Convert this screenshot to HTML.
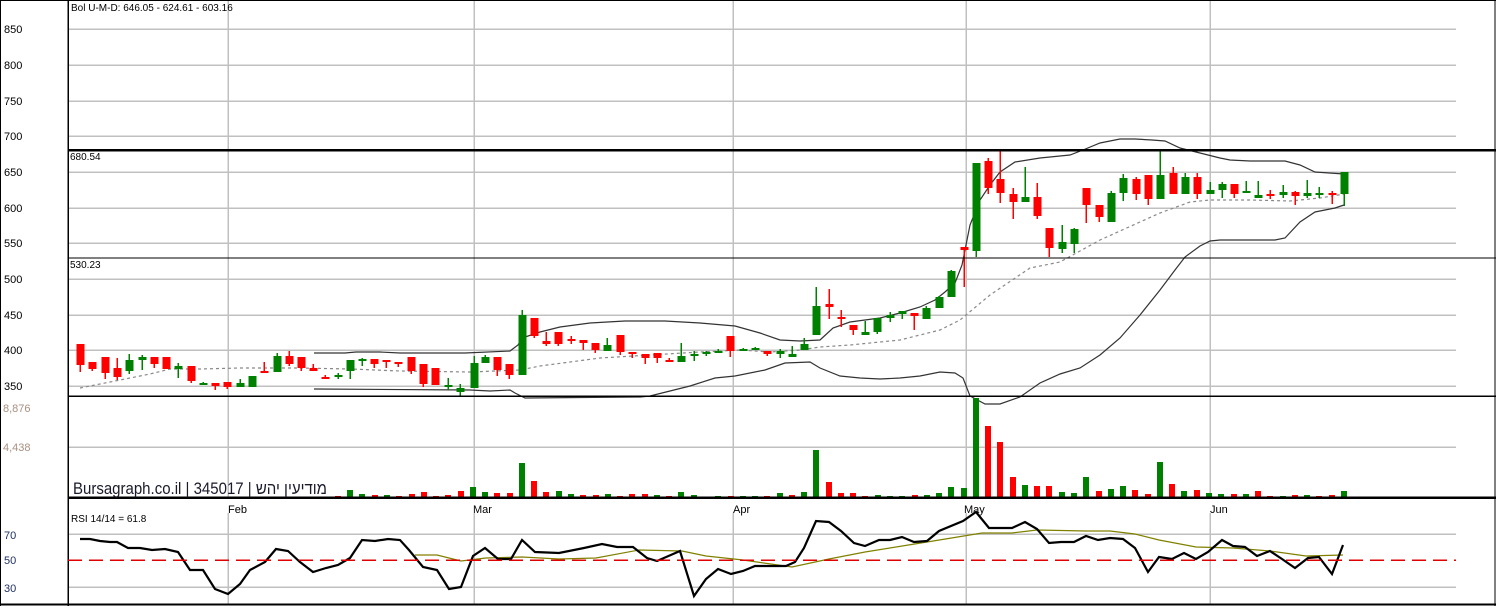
<!DOCTYPE html>
<html><head><meta charset="utf-8">
<style>
html,body{margin:0;padding:0;background:#fff;}
body{width:1496px;height:606px;overflow:hidden;}
svg text{font-family:"Liberation Sans",Arial,sans-serif;}
</style></head>
<body>
<svg id="c" width="1496" height="606" xmlns="http://www.w3.org/2000/svg" shape-rendering="crispEdges">
<rect width="1496" height="606" fill="#fff"/>
<g id="grid" stroke="#c0c0c0" stroke-width="1.5"></g>
<g id="bands" fill="none" shape-rendering="auto"></g>
<g id="cand"></g>
<g id="vol"></g>
<g id="rsi" fill="none" shape-rendering="auto"></g>
<g id="frame" stroke="#000"></g>
<g font-size="11" fill="#000">
<text x="4" y="33">850</text><text x="4" y="69">800</text><text x="4" y="105">750</text>
<text x="4" y="140">700</text><text x="4" y="176">650</text><text x="4" y="212">600</text>
<text x="4" y="247">550</text><text x="4" y="283">500</text><text x="4" y="319">450</text>
<text x="4" y="354">400</text><text x="4" y="390">350</text>
<text x="3" y="412" fill="#a89080">8,876</text><text x="3" y="451" fill="#a89080">4,438</text>
<text x="4" y="539" fill="#203060">70</text><text x="4" y="564" fill="#203060">50</text><text x="4" y="592" fill="#203060">30</text>
<text x="71" y="11" font-size="10">Bol U-M-D: 646.05 - 624.61 - 603.16</text>
<text x="70" y="160" font-size="10">680.54</text>
<text x="70" y="268" font-size="10">530.23</text>
<text x="71" y="522" font-size="10">RSI 14/14 = 61.8</text>
<text x="228" y="513">Feb</text><text x="473" y="513">Mar</text><text x="733" y="513">Apr</text>
<text x="964" y="513">May</text><text x="1210" y="513">Jun</text>
<text x="73" y="494" font-size="17" fill="#1a1a2a" textLength="254" lengthAdjust="spacingAndGlyphs" font-family="'Liberation Sans','Noto Sans CJK JP',sans-serif">Bursagraph.co.il | 345017 | מודיעין יהש</text>
</g>
</svg>
<script>
var NS="http://www.w3.org/2000/svg";
function el(p,t,a){var e=document.createElementNS(NS,t);for(var k in a)e.setAttribute(k,a[k]);document.getElementById(p).appendChild(e);return e;}
[29,65,101,136,172,208,243,279,315,350,386,447,534,587].forEach(function(y){el("grid","line",{x1:68,x2:1456,y1:y,y2:y});});
[228,474,733,966,1210].forEach(function(x){el("grid","line",{x1:x,x2:x,y1:1,y2:497});el("grid","line",{x1:x,x2:x,y1:513,y2:604});});
el("frame","line",{x1:0,x2:1496,y1:0.5,y2:0.5,"stroke-width":1});
el("frame","line",{x1:0.5,x2:0.5,y1:0,y2:606,"stroke-width":1});
el("frame","line",{x1:1495,x2:1495,y1:0,y2:606,"stroke-width":1});
el("frame","line",{x1:68,x2:68,y1:0,y2:606,"stroke-width":1.5});
el("frame","line",{x1:68,x2:1496,y1:150,y2:150,"stroke-width":2.5});
el("frame","line",{x1:68,x2:1496,y1:258,y2:258,"stroke-width":1.3});
el("frame","line",{x1:68,x2:1496,y1:396,y2:396,"stroke-width":1.5});
el("frame","line",{x1:68,x2:1496,y1:497.5,y2:497.5,"stroke-width":2.5});
el("frame","line",{x1:0,x2:1496,y1:604.5,y2:604.5,"stroke-width":2});
el("frame","line",{x1:68,x2:1456,y1:560,y2:560,stroke:"#e00000","stroke-width":1.5,"stroke-dasharray":"14,7"});
function pl(g,pts,st,w,dash){var a={points:pts.map(function(p){return p.join(",")}).join(" "),stroke:st,"stroke-width":w};if(dash)a["stroke-dasharray"]=dash;el(g,"polyline",a);}
pl("bands",[[314,353],[345,353],[356,352],[380,352],[400,353],[465,353],[510,351],[518,345],[522,338],[540,332],[560,327],[590,323],[625,321],[665,321],[700,323],[735,326],[760,333],[780,340],[800,341],[820,340],[833,328],[850,322],[880,318],[900,313],[920,307],[935,300],[945,292],[955,283],[962,265],[970,225],[980,200],[990,185],[1000,172],[1015,162],[1040,158],[1070,155],[1083,150],[1100,143],[1120,139],[1135,139],[1152,140],[1165,141],[1180,148],[1200,153],[1220,158],[1230,160],[1250,161],[1285,161],[1300,165],[1315,172],[1344,174]],"#333",1.2);
pl("bands",[[314,389],[470,390],[490,391],[510,390],[515,393],[525,398],[640,397],[650,396],[690,386],[715,378],[735,376],[765,370],[785,363],[810,362],[820,368],[840,376],[860,378],[880,379],[900,378],[920,376],[940,372],[955,373],[963,378],[970,396],[985,404],[1000,404],[1020,397],[1040,383],[1060,374],[1080,368],[1100,355],[1120,338],[1140,315],[1160,290],[1175,270],[1185,257],[1200,246],[1210,241],[1220,240],[1275,240],[1285,238],[1300,222],[1315,212],[1335,208],[1344,205]],"#333",1.2);
pl("bands",[[80,388],[120,380],[150,374],[170,369],[200,369],[240,368],[300,368],[350,369],[400,371],[470,372],[520,370],[540,366],[600,358],[650,355],[700,352],[740,350],[770,352],[800,350],[820,347],[850,345],[900,340],[940,330],[960,320],[990,295],[1030,268],[1060,262],[1100,240],[1140,222],[1160,213],[1190,202],[1210,200],[1250,200],[1290,201],[1320,198],[1344,194]],"#888",1.2,"3,3");
var C=[[80,344,365,344,372,"r"],[92,362,369,362,371,"r"],[105,357,373,357,379,"r"],[117,368,377,358,380,"r"],[129,360,371,354,374,"g"],[142,357,360,355,370,"g"],[154,357,364,357,368,"r"],[166,357,369,357,369,"r"],[178,366,369,363,378,"g"],[191,366,381,366,383,"r"],[203,383,385,382,385,"g"],[215,383,386,383,390,"r"],[227,382,387,382,389,"r"],[240,383,387,379,387,"g"],[252,376,387,376,387,"g"],[264,371,372,362,372,"r"],[277,356,372,353,372,"g"],[289,356,364,351,366,"r"],[301,357,368,357,371,"r"],[313,368,371,364,371,"r"],[325,377,378,375,378,"r"],[338,375,377,373,379,"g"],[350,360,371,360,379,"g"],[362,359,360,358,366,"g"],[374,359,364,359,368,"r"],[386,360,362,360,368,"r"],[398,362,364,362,367,"r"],[411,357,371,357,374,"r"],[423,364,384,364,387,"r"],[435,368,385,368,385,"r"],[448,385,387,378,390,"g"],[460,388,392,384,396,"g"],[474,363,388,356,388,"g"],[485,357,363,355,363,"g"],[497,357,370,357,376,"r"],[509,364,375,364,379,"r"],[522,315,375,310,375,"g"],[534,318,336,318,338,"r"],[546,341,344,332,346,"r"],[558,332,344,332,346,"r"],[571,339,341,336,344,"r"],[583,340,343,340,350,"r"],[595,343,350,343,353,"r"],[607,345,351,338,351,"g"],[620,335,352,335,355,"r"],[632,352,354,352,358,"r"],[645,354,358,354,364,"r"],[657,353,358,353,363,"r"],[669,360,362,358,362,"r"],[681,356,362,343,362,"g"],[694,354,356,351,361,"g"],[706,352,354,351,356,"g"],[718,351,352,349,352,"g"],[730,336,351,336,357,"r"],[743,349,351,348,351,"g"],[755,348,349,347,350,"g"],[767,351,354,351,356,"r"],[780,351,354,349,358,"g"],[792,354,357,346,357,"g"],[804,344,350,338,350,"g"],[816,306,335,287,335,"g"],[829,304,307,289,319,"r"],[841,317,319,310,327,"r"],[853,325,330,325,335,"r"],[865,332,335,321,335,"g"],[877,318,332,318,334,"g"],[890,315,318,312,322,"g"],[902,311,314,311,319,"g"],[914,313,316,313,330,"r"],[926,308,319,306,319,"g"],[939,297,308,296,308,"g"],[951,271,297,270,297,"g"],[964,247,250,247,287,"r"],[976,163,251,163,257,"g"],[988,161,188,158,194,"r"],[1000,179,193,151,203,"r"],[1013,194,202,188,219,"r"],[1025,197,202,167,202,"g"],[1037,197,216,183,219,"r"],[1049,228,248,228,257,"r"],[1062,242,249,225,253,"g"],[1074,229,244,228,253,"g"],[1086,188,205,188,223,"r"],[1099,205,217,205,222,"r"],[1111,193,222,191,222,"g"],[1123,178,193,174,201,"g"],[1136,179,194,177,200,"r"],[1148,175,199,175,205,"r"],[1160,175,199,151,199,"g"],[1173,173,194,167,194,"r"],[1185,177,194,173,194,"g"],[1197,177,194,173,199,"r"],[1210,190,194,182,194,"g"],[1222,184,190,182,198,"g"],[1234,184,194,184,198,"r"],[1246,191,193,181,193,"g"],[1258,195,198,181,198,"g"],[1270,194,196,190,199,"r"],[1283,192,195,185,198,"g"],[1295,192,196,191,205,"r"],[1307,193,196,180,198,"g"],[1319,193,195,187,198,"g"],[1332,193,195,191,204,"r"],[1344,172,194,172,206,"g"]];
C.forEach(function(c){var col=c[5]=="g"?"#008000":"#ff0000";
el("cand","rect",{x:c[0]-0.5,y:c[3],width:1.5,height:c[4]-c[3],fill:col});
el("cand","rect",{x:c[0]-3.5,y:c[1],width:8,height:Math.max(2,c[2]-c[1]),fill:col});});
var V1=[[24,303,"r"],[60,285,"g"],[96,297,"g"],[135,300,"r"],[171,300,"g"],[207,303,"r"],[246,297,"r"],[282,291,"r"],[318,303,"r"],[354,300,"r"],[393,288,"r"],[429,276,"g"],[465,291,"g"],[501,294,"r"],[540,294,"r"],[576,204,"g"],[612,258,"r"],[648,291,"r"],[687,288,"g"],[723,297,"g"],[759,300,"r"],[798,300,"r"],[834,297,"g"],[870,303,"r"],[906,297,"r"],[945,297,"r"],[981,300,"g"],[1017,303,"r"],[1053,291,"g"],[1092,300,"g"],[1164,303,"g"],[1203,303,"r"],[1239,303,"g"],[1275,303,"g"],[1311,303,"r"],[1350,294,"g"],[1386,300,"r"],[1422,291,"g"],[1458,165,"g"],[1497,261,"r"]];
var V2=[[3,294,"r"],[39,294,"r"],[75,303,"r"],[114,300,"g"],[150,303,"g"],[186,303,"g"],[225,300,"r"],[261,300,"g"],[297,294,"g"],[333,276,"g"],[372,279,"g"],[408,9,"g"],[444,93,"r"],[480,141,"r"],[519,246,"r"],[555,270,"g"],[591,273,"r"],[627,273,"r"],[666,291,"g"],[702,294,"g"],[738,246,"g"],[777,288,"r"],[813,282,"g"],[849,273,"g"],[885,285,"r"],[924,297,"r"],[960,201,"g"],[996,267,"r"],[1032,288,"g"],[1071,285,"r"],[1107,294,"g"],[1143,297,"g"],[1182,297,"r"],[1218,297,"g"],[1254,288,"r"],[1290,303,"r"],[1329,303,"g"],[1365,300,"r"],[1401,300,"g"],[1437,303,"r"],[1476,300,"r"],[1512,288,"g"]];
function vb(ox,v){var x=ox+v[0]/3,y=395+v[1]/3;el("vol","rect",{x:x-3,y:y,width:6,height:497-y,fill:v[2]=="g"?"#008000":"#ff0000"});}
V1.forEach(function(v){vb(330,v)});V2.forEach(function(v){vb(840,v)});
pl("rsi",[[415,555],[437,555],[461,561],[486,558],[522,557],[559,559],[596,558],[639,550],[682,551],[706,556],[743,560],[792,567],[829,559],[865,552],[927,542],[982,533],[1012,533],[1037,530],[1086,531],[1110,531],[1135,534],[1159,540],[1196,547],[1233,548],[1270,551],[1306,556],[1343,555]],"#808000",1.2);
pl("rsi",[[80,539],[90,539],[100,541],[110,542],[117,542],[128,548],[140,548],[152,550],[165,549],[178,552],[190,570],[203,570],[215,589],[228,594],[240,584],[250,570],[265,562],[276,549],[288,551],[300,562],[313,572],[326,568],[338,565],[350,558],[362,540],[375,541],[388,539],[400,540],[409,550],[423,567],[437,570],[449,589],[461,587],[473,556],[485,548],[498,559],[511,559],[522,540],[535,552],[559,553],[584,548],[602,544],[617,547],[633,547],[647,558],[657,561],[680,551],[694,596],[706,579],[718,569],[731,574],[743,571],[755,566],[786,566],[795,562],[804,548],[816,521],[829,522],[841,531],[854,543],[865,546],[879,540],[890,540],[902,537],[914,542],[927,541],[939,531],[963,521],[976,512],[989,528],[1012,528],[1025,522],[1037,529],[1049,543],[1061,542],[1074,542],[1086,536],[1098,540],[1110,538],[1123,539],[1135,548],[1148,572],[1159,557],[1172,559],[1184,553],[1196,559],[1208,552],[1222,540],[1233,546],[1245,547],[1257,556],[1270,551],[1282,559],[1295,568],[1308,558],[1319,557],[1332,574],[1343,545]],"#000",2.2);
</script>
</body></html>
